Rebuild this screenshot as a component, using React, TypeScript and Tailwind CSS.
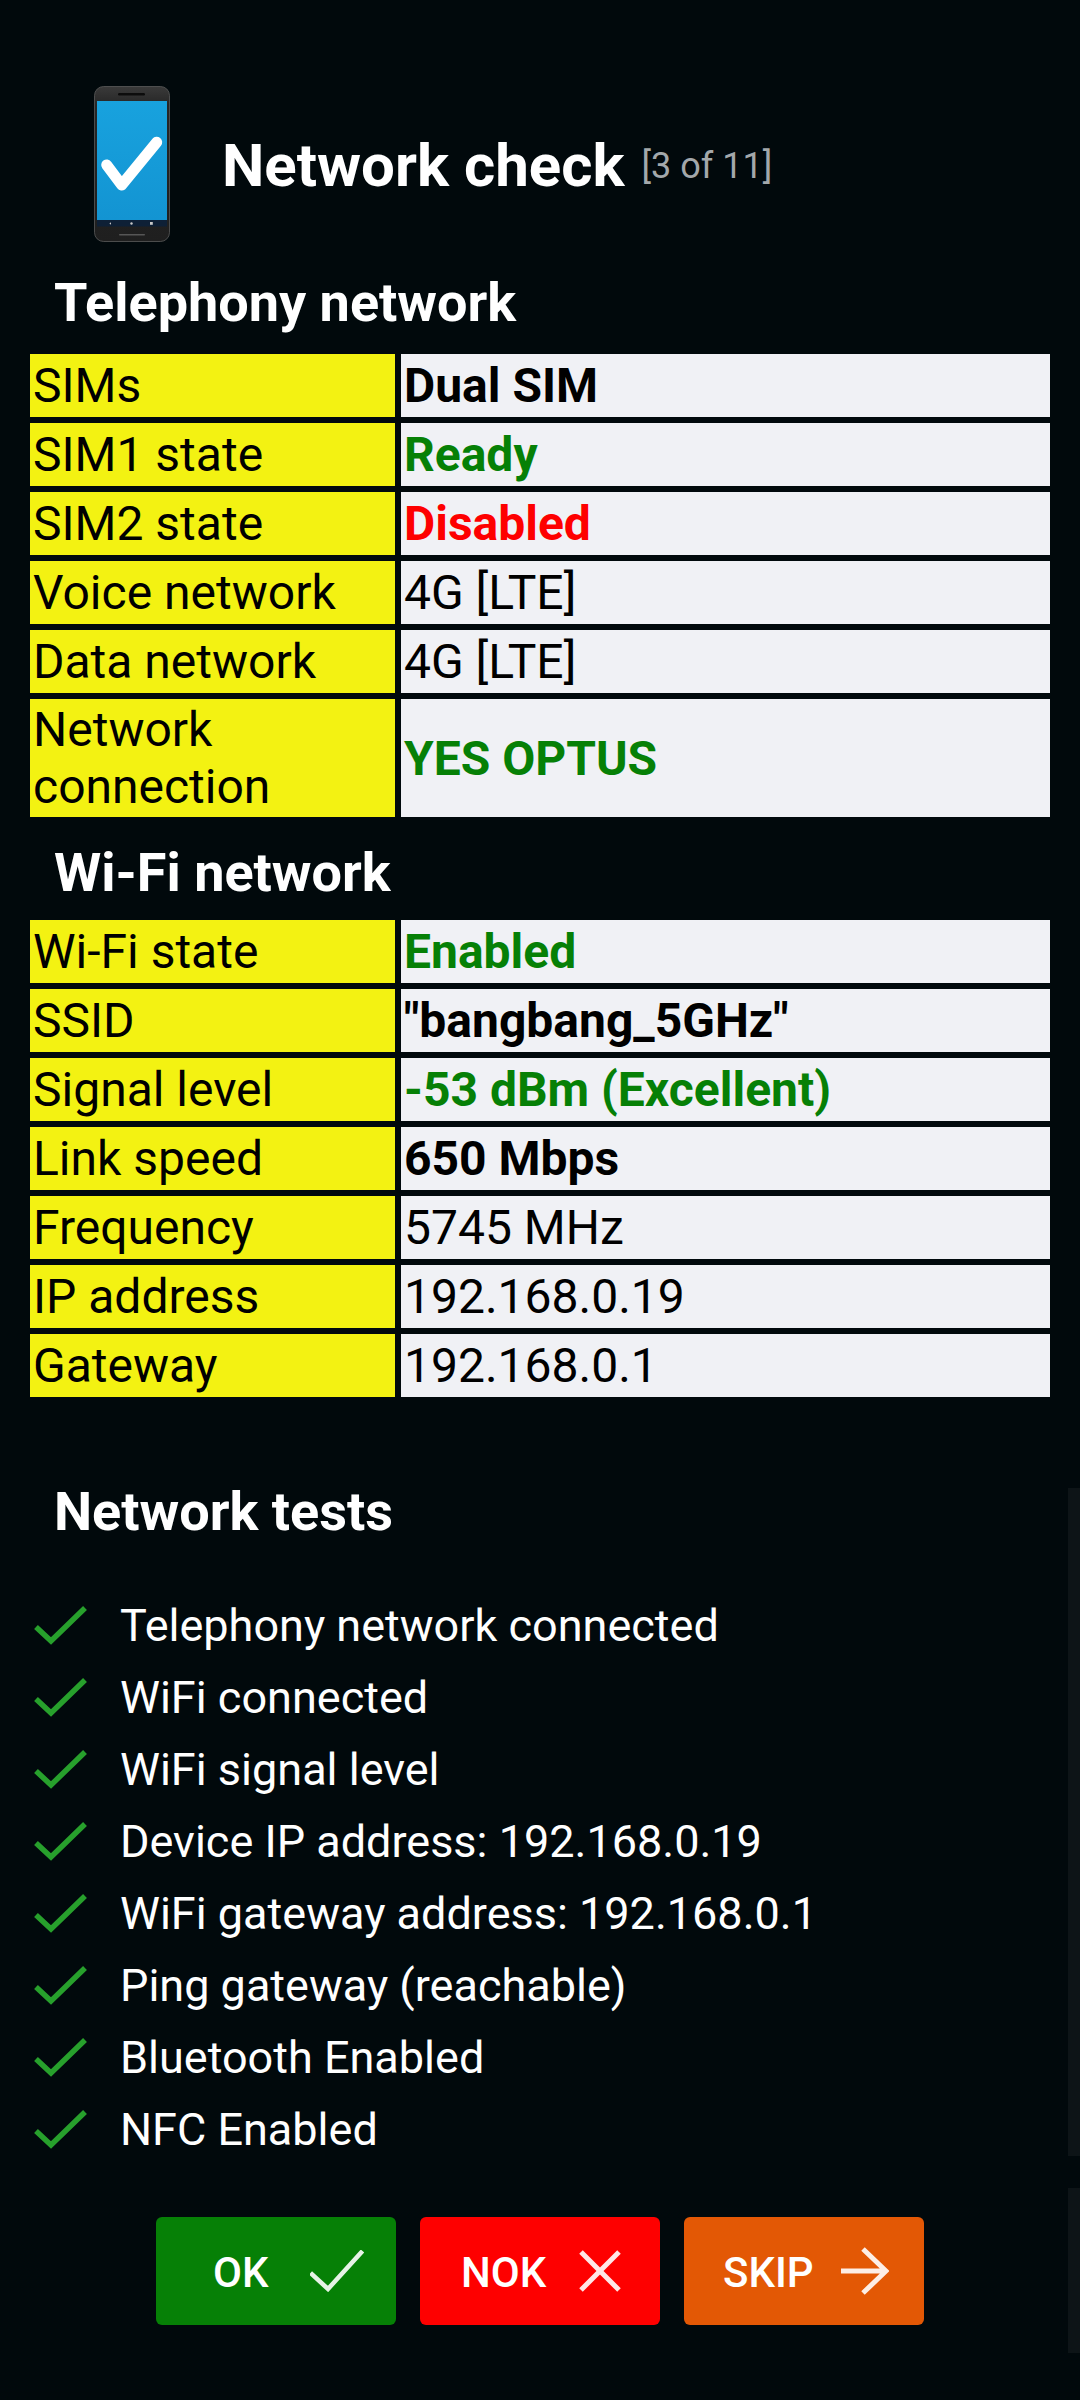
import React from "react";

type Row = { label: string; value: string; cls?: string; tall?: boolean };

const GREEN = "font-bold text-[#068006]";
const RED = "font-bold text-[#fe0000]";
const BOLD = "font-bold text-black";

const telephony: Row[] = [
  { label: "SIMs", value: "Dual SIM", cls: BOLD },
  { label: "SIM1 state", value: "Ready", cls: GREEN },
  { label: "SIM2 state", value: "Disabled", cls: RED },
  { label: "Voice network", value: "4G [LTE]" },
  { label: "Data network", value: "4G [LTE]" },
  { label: "Network connection", value: "YES OPTUS", cls: GREEN, tall: true },
];

const wifi: Row[] = [
  { label: "Wi-Fi state", value: "Enabled", cls: GREEN },
  { label: "SSID", value: '"bangbang_5GHz"', cls: BOLD },
  { label: "Signal level", value: "-53 dBm (Excellent)", cls: GREEN },
  { label: "Link speed", value: "650 Mbps", cls: BOLD },
  { label: "Frequency", value: "5745 MHz" },
  { label: "IP address", value: "192.168.0.19" },
  { label: "Gateway", value: "192.168.0.1" },
];

const tests = [
  "Telephony network connected",
  "WiFi connected",
  "WiFi signal level",
  "Device IP address: 192.168.0.19",
  "WiFi gateway address: 192.168.0.1",
  "Ping gateway (reachable)",
  "Bluetooth Enabled",
  "NFC Enabled",
];

function PhoneIcon() {
  return (
    <svg width="76" height="156" viewBox="0 0 76 156" className="shrink-0">
      <defs>
        <linearGradient id="scr" x1="0" y1="0" x2="0" y2="1">
          <stop offset="0" stopColor="#18a2de" />
          <stop offset="1" stopColor="#1394d2" />
        </linearGradient>
        <linearGradient id="body" x1="0" y1="0" x2="0" y2="1">
          <stop offset="0" stopColor="#3a3a3a" />
          <stop offset="0.12" stopColor="#262626" />
          <stop offset="1" stopColor="#1f1f1f" />
        </linearGradient>
      </defs>
      <rect x="0.5" y="0.5" width="75" height="155" rx="9" fill="url(#body)" stroke="#5a5a5a" strokeWidth="0.8" />
      <rect x="24" y="7" width="27" height="2.6" rx="1.3" fill="#0c0c0c" />
      <rect x="3" y="15" width="70" height="119" fill="url(#scr)" />
      <rect x="3" y="134" width="70" height="6.5" fill="#0e2036" />
      <path d="M17 136.2l-1.6 1.3 1.6 1.3z" fill="#c8c8c8" />
      <circle cx="37.5" cy="137.5" r="1.2" fill="#c8c8c8" />
      <rect x="56" y="136" width="2.8" height="2.8" fill="#c8c8c8" />
      <rect x="25" y="148" width="26" height="1.4" rx="0.7" fill="#565656" />
      <path d="M12.7 79L27.7 99L62.7 56.3" fill="none" stroke="#fff" strokeWidth="11" strokeLinecap="round" strokeLinejoin="round" />
    </svg>
  );
}

function SectionTitle({ children, className }: { children: React.ReactNode; className: string }) {
  return (
    <h2 className={`pl-[54px] text-[54px] leading-[60px] font-bold text-white ${className}`}>{children}</h2>
  );
}

function InfoTable({ rows, className }: { rows: Row[]; className: string }) {
  return (
    <div className={`mx-[30px] grid w-[1020px] grid-cols-[365px_649px] gap-[6px] text-[48px] leading-[57px] ${className}`}>
      {rows.map((r) => (
        <React.Fragment key={r.label}>
          <div className={`flex items-center bg-[#f3f212] pl-[3px] text-black ${r.tall ? "h-[118px]" : "h-[63px]"}`}>
            <span>{r.label}</span>
          </div>
          <div className={`flex items-center bg-[#f0f1f5] pl-[3px] ${r.tall ? "h-[118px]" : "h-[63px]"} ${r.cls ?? "text-black"}`}>
            <span>{r.value}</span>
          </div>
        </React.Fragment>
      ))}
    </div>
  );
}

function ActionButton({ label, color, pad, children }: { label: string; color: string; pad: string; children: React.ReactNode }) {
  return (
    <div className={`flex h-[108px] w-[240px] items-center rounded-[6px] text-[42px] font-medium text-white ${color} ${pad}`}>
      <span className="pt-[3px]">{label}</span>
      {children}
    </div>
  );
}

export default function App() {
  return (
    <div
      className="relative h-[2400px] w-[1080px] overflow-hidden bg-[#01090c]"
      style={{ fontFamily: "Roboto, sans-serif" }}
    >
      <div className="flex items-center pt-[86px] pl-[94px]">
        <PhoneIcon />
        <h1 className="ml-[52px] pt-[3px] text-[60px] leading-[66px] font-bold text-white">Network check</h1>
        <span className="ml-[17px] pt-[3px] text-[36px] leading-[44px] text-[#a3a8ab]">[3 of 11]</span>
      </div>

      <SectionTitle className="mt-[31px]">Telephony network</SectionTitle>
      <InfoTable rows={telephony} className="mt-[21px]" />

      <SectionTitle className="mt-[26px]">Wi-Fi network</SectionTitle>
      <InfoTable rows={wifi} className="mt-[17px]" />

      <SectionTitle className="mt-[85px]">Network tests</SectionTitle>

      <ul className="mt-[47px] flex flex-col text-[45px] leading-[72px] text-white">
        {tests.map((t) => (
          <li key={t} className="flex h-[72px] items-center pl-[34px]">
            <svg width="54" height="42" viewBox="0 0 54 42" className="shrink-0">
              <path d="M2 23L17 37L51 4" fill="none" stroke="#27a02c" strokeWidth="5.5" />
            </svg>
            <span className="ml-[32px] pt-[1px]">{t}</span>
          </li>
        ))}
      </ul>

      <div className="mt-[52px] flex justify-center gap-[24px]">
        <ActionButton label="OK" color="bg-[#068006]" pad="pl-[57px]">
          <svg width="54" height="42" viewBox="0 0 54 42" className="ml-[42px]">
            <path d="M0.5 23L18 39L52.5 1" fill="none" stroke="#fff" strokeWidth="4.5" opacity="0.9" />
          </svg>
        </ActionButton>
        <ActionButton label="NOK" color="bg-[#fe0000]" pad="pl-[41px]">
          <svg width="42" height="42" viewBox="0 0 42 42" className="ml-[33px]">
            <path d="M2 2L40 40M40 2L2 40" fill="none" stroke="#fff" strokeWidth="5" opacity="0.9" />
          </svg>
        </ActionButton>
        <ActionButton label="SKIP" color="bg-[#e35805]" pad="pl-[39px]">
          <svg width="48" height="48" viewBox="0 0 48 48" className="ml-[27px]">
            <path d="M0 24H45M22 2L45 24L22 46" fill="none" stroke="#fff" strokeWidth="5" opacity="0.9" />
          </svg>
        </ActionButton>
      </div>

      <div className="absolute top-[1488px] right-0 h-[668px] w-[12px] bg-[#0d1417]" />
      <div className="absolute top-[2188px] right-0 h-[165px] w-[12px] bg-[#0d1417]" />
    </div>
  );
}
